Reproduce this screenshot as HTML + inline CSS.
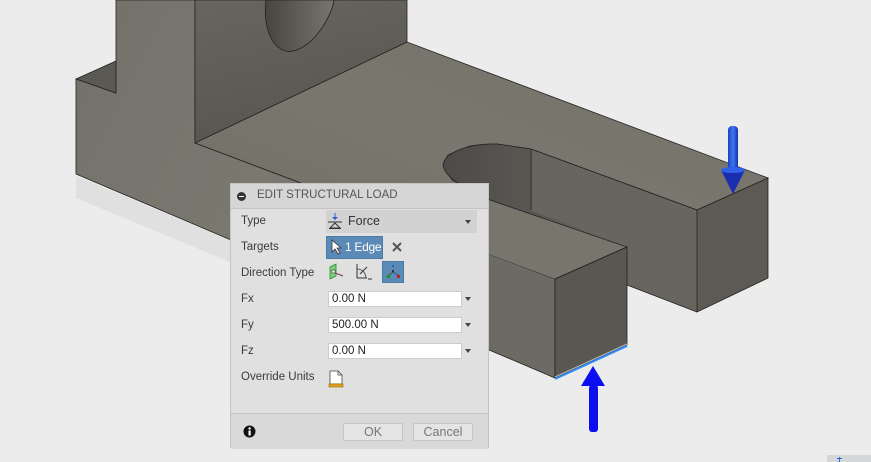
<!DOCTYPE html>
<html><head><style>
body{margin:0;width:871px;height:462px;overflow:hidden;background:#ececec;font-family:"Liberation Sans",sans-serif;position:relative}
svg.s{position:absolute;left:0;top:0}
.dlg{position:absolute;left:230px;top:183px;width:259px;height:265px;background:#e0e0e0;border:1px solid #c4c4c4;box-sizing:border-box;font-size:11px;color:#333}
.hdr{height:24px;background:#d6d6d6;border-bottom:1px solid #c4c4c4;position:relative}
.hdr .t{position:absolute;left:26px;top:5px;color:#555;font-size:11.5px}
.hdr .m{position:absolute;left:6px;top:8px;width:9px;height:9px;border-radius:50%;background:#333}
.hdr .m:after{content:"";position:absolute;left:2px;top:4px;width:5px;height:1px;background:#fff}
.l{position:absolute;left:10px;font-size:11.5px;color:#3a3a3a}
.inp{position:absolute;left:97px;width:134px;height:16px;background:#fff;border:1px solid #ccc;box-sizing:border-box;font-size:11.5px;padding-left:3px;line-height:14px;color:#222}
.ar{position:absolute;left:234px;width:0;height:0;border-left:3px solid transparent;border-right:3px solid transparent;border-top:4px solid #444}
.ftr{position:absolute;left:0;top:229px;width:257px;height:35px;background:#d9d9d9;border-top:1px solid #c4c4c4}
.btn{position:absolute;top:9px;height:18px;border:1px solid #c6c6c6;background:#e4e4e4;box-sizing:border-box;text-align:center;line-height:16px;font-size:12.5px;color:#777}
</style></head><body>
<svg class="s" width="871" height="462" viewBox="0 0 871 462">
<defs>
<linearGradient id="gf" x1="0" y1="0" x2="1" y2="0.4"><stop offset="0" stop-color="#73716a"/><stop offset="0.5" stop-color="#7a786f"/><stop offset="1" stop-color="#6c6a63"/></linearGradient>
<linearGradient id="gu" x1="0" y1="0" x2="0.3" y2="1"><stop offset="0" stop-color="#67655e"/><stop offset="1" stop-color="#58564f"/></linearGradient>
<linearGradient id="gt" x1="0" y1="1" x2="1" y2="0"><stop offset="0" stop-color="#6e6c64"/><stop offset="0.5" stop-color="#7a776e"/><stop offset="1" stop-color="#737168"/></linearGradient>
<linearGradient id="gh" x1="0" y1="0" x2="1" y2="0"><stop offset="0" stop-color="#47453f"/><stop offset="1" stop-color="#77756d"/></linearGradient>
<linearGradient id="gs" x1="0" y1="0" x2="1" y2="0"><stop offset="0" stop-color="#4d4b47"/><stop offset="0.7" stop-color="#5f5d58"/><stop offset="1" stop-color="#6a6862"/></linearGradient>
<linearGradient id="ga" x1="0" y1="0" x2="1" y2="0"><stop offset="0" stop-color="#1b3fc8"/><stop offset="0.5" stop-color="#3d78f0"/><stop offset="1" stop-color="#1631a8"/></linearGradient>
</defs>
<polygon points="76,176 230,240 230,262 76,198" fill="#dcdcdc" opacity="0.7"/>
<polygon points="76,79 116,93 116,0 195,0 195,143 555,279 555,378 76,174" fill="url(#gf)" stroke="#222" stroke-width="0.8"/>
<polygon points="76,79 116,61 116,93" fill="#5b5953" stroke="#222" stroke-width="0.8"/>
<polygon points="195,0 407,0 407,42 195,143" fill="url(#gu)" stroke="#222" stroke-width="0.8"/>
<path d="M266,0 C262,30 275,55 293,51 C315,46 332,15 334,0 Z" fill="url(#gh)" stroke="#222" stroke-width="0.8"/>
<polygon points="195,143 407,42 768,178 697,210 531,149 497,144 470,146 448,155 443,165 452,180 490,200 627,247 555,279" fill="url(#gt)" stroke="#222" stroke-width="0.8"/>
<path d="M531,149 L697,210 L697,312 L627,285 L627,247 L490,200 C470,190 445,180 443,165 C445,152 470,143 497,144 Z" fill="#67655e"/>
<path d="M531,149 L531,210 L627,247 L490,200 C470,190 445,180 443,165 C445,152 470,143 497,144 Z" fill="url(#gs)"/>
<path d="M531,149 L697,210 M443,165 C445,152 470,143 497,144 L531,149 M531,149 L531,210" stroke="#222" stroke-width="0.8" fill="none"/>
<path d="M443,165 C445,180 470,190 490,200" stroke="#222" stroke-width="0.8" fill="none"/>
<polygon points="697,210 768,178 768,278 697,312" fill="#5c5a53" stroke="#222" stroke-width="0.8"/>
<path d="M627,285 L697,312" stroke="#222" stroke-width="0.8"/>
<polygon points="490,200 627,247 555,279 440,236" fill="#77756c"/>
<polygon points="555,279 627,247 627,345 555,378" fill="#59574f" stroke="#222" stroke-width="0.8"/>
<path d="M555,279 L627,247 L490,200" stroke="#222" stroke-width="0.8" fill="none"/>
<line x1="555" y1="379" x2="627" y2="346" stroke="#2e8cff" stroke-width="2"/>
<line x1="555" y1="377" x2="627" y2="344" stroke="#b9b9b9" stroke-width="1"/>
<rect x="589" y="385" width="9" height="47" rx="3" fill="#0a0ef0"/>
<polygon points="593,366 605,386 581,386" fill="#0a0ef0"/>
<rect x="728" y="126" width="10" height="46" rx="4" fill="url(#ga)"/>
<polygon points="721,170 745,170 733,194" fill="#1a2fb0"/>
<ellipse cx="733" cy="170" rx="12" ry="3" fill="#2f62e8"/>
<rect x="827" y="455" width="44" height="7" fill="#d4d6da"/>
<rect x="839" y="457" width="1" height="5" fill="#2a6ad8"/><rect x="837" y="458" width="5" height="1" fill="#2a6ad8"/>
</svg>

<div class="dlg">
 <div class="hdr"><div class="m"></div><div class="t">EDIT STRUCTURAL LOAD</div></div>
 <div class="l" style="top:31px">Type</div>
 <div style="position:absolute;left:95px;top:26px;width:151px;height:23px;background:#d2d2d2"></div>
 <svg style="position:absolute;left:96px;top:28px" width="16" height="18"><line x1="8" y1="1" x2="8" y2="7" stroke="#2a5fd0"/><polygon points="5,5 11,5 8,8" fill="#2a5fd0"/><line x1="1" y1="10" x2="15" y2="10" stroke="#333"/><polygon points="8,11 3,16 13,16" fill="none" stroke="#333"/><line x1="2" y1="16.5" x2="14" y2="16.5" stroke="#333"/></svg>
 <div style="position:absolute;left:117px;top:30px;font-size:12.5px;color:#333">Force</div>
 <div class="ar" style="top:36px"></div>
 <div class="l" style="top:57px">Targets</div>
 <div style="position:absolute;left:95px;top:52px;width:57px;height:23px;background:#5b8ab7;border:1px solid #4c7aa6;box-sizing:border-box"></div>
 <svg style="position:absolute;left:99px;top:55px" width="12" height="16"><polygon points="2,1 2,13 5,10 8,15 10,14 7,9 11,9" fill="#fff" stroke="#333" stroke-width="0.8"/></svg>
 <div style="position:absolute;left:114px;top:56px;font-size:12px;color:#fff;letter-spacing:-0.3px">1 Edge</div>
 <svg style="position:absolute;left:161px;top:58px" width="10" height="10"><path d="M1,1 L9,9 M9,1 L1,9" stroke="#555" stroke-width="2"/></svg>
 <div class="l" style="top:83px">Direction Type</div>
 <svg style="position:absolute;left:97px;top:78px" width="20" height="20"><polygon points="2,5 8,2 8,14 2,17" fill="#7fcf7f" stroke="#2a8a2a" stroke-width="0.8"/><rect x="4" y="8" width="3" height="3" fill="#fff" stroke="#333" stroke-width="0.6"/><line x1="7" y1="11" x2="15" y2="14" stroke="#7a3a4a"/></svg>
 <svg style="position:absolute;left:123px;top:78px" width="20" height="20"><line x1="3" y1="2" x2="3" y2="16" stroke="#333"/><line x1="3" y1="16" x2="13" y2="16" stroke="#333"/><path d="M3,7 A9,9 0 0 1 12,16" fill="#ddd" stroke="#333" stroke-width="0.8"/><line x1="6" y1="12" x2="13" y2="5" stroke="#333"/><line x1="14" y1="17" x2="18" y2="17" stroke="#333"/></svg>
 <div style="position:absolute;left:151px;top:77px;width:22px;height:22px;background:#5b8ab7;border:1px solid #4c7aa6;box-sizing:border-box"></div>
 <svg style="position:absolute;left:153px;top:79px" width="18" height="18"><rect x="8" y="2" width="2" height="2" fill="#2a5fd0"/><rect x="8" y="7" width="2" height="2" fill="#333"/><rect x="3" y="12" width="3" height="3" fill="#1a9a1a"/><rect x="13" y="12" width="3" height="3" fill="#c0202a"/><line x1="9" y1="9" x2="5" y2="12" stroke="#333" stroke-width="0.6"/><line x1="9" y1="9" x2="14" y2="12" stroke="#333" stroke-width="0.6"/></svg>
 <div class="l" style="top:109px">Fx</div><div class="inp" style="top:107px">0.00 N</div><div class="ar" style="top:113px"></div>
 <div class="l" style="top:135px">Fy</div><div class="inp" style="top:133px">500.00 N</div><div class="ar" style="top:139px"></div>
 <div class="l" style="top:161px">Fz</div><div class="inp" style="top:159px">0.00 N</div><div class="ar" style="top:165px"></div>
 <div class="l" style="top:187px">Override Units</div>
 <svg style="position:absolute;left:97px;top:186px" width="16" height="18"><path d="M2,1 L10,1 L14,5 L14,14 L2,14 Z" fill="#fff" stroke="#444" stroke-width="0.8"/><path d="M10,1 L10,5 L14,5" fill="none" stroke="#444" stroke-width="0.8"/><rect x="1" y="14" width="14" height="3" fill="#e0a020" stroke="#9a6a00" stroke-width="0.6"/></svg>
 <div class="ftr">
  <svg style="position:absolute;left:12px;top:11px" width="13" height="13"><circle cx="6.5" cy="6.5" r="6" fill="#111"/><rect x="5.5" y="5.5" width="2.2" height="5" fill="#fff"/><circle cx="6.6" cy="3.5" r="1.2" fill="#fff"/></svg>
  <div class="btn" style="left:112px;width:60px">OK</div>
  <div class="btn" style="left:182px;width:60px">Cancel</div>
 </div>
</div>
</body></html>
